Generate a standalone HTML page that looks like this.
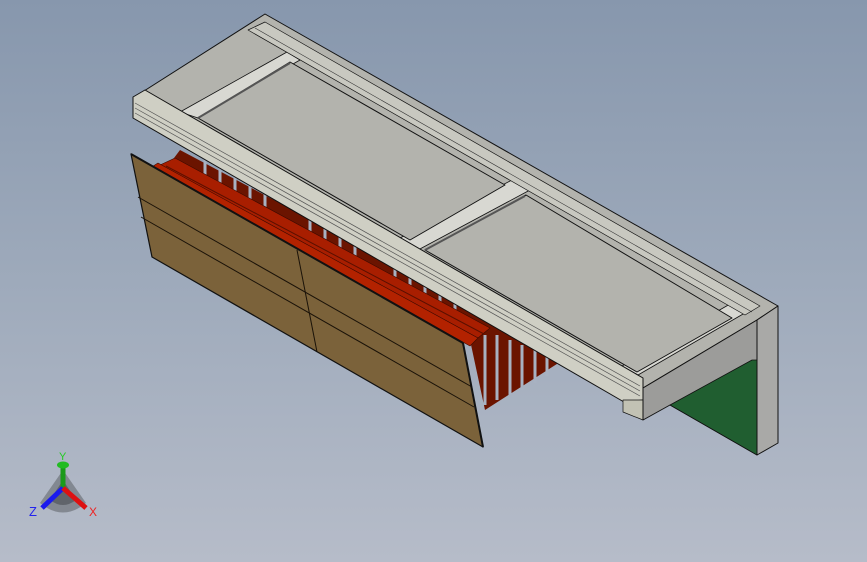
<!DOCTYPE html>
<html><head><style>
html,body{margin:0;padding:0;width:867px;height:562px;overflow:hidden}
body{background:linear-gradient(180deg,#8797ad 0%,#9eaabb 50%,#b6bcc9 100%)}
svg{display:block}
</style></head><body>
<svg width="867" height="562" viewBox="0 0 867 562" xmlns="http://www.w3.org/2000/svg" stroke-linejoin="round">
<!-- slats zone behind beams -->
<polygon points="180,150 560,352 560,362 485,410 470,340 165,170" fill="#6b1400"/>
<g stroke="#a8b2c2" stroke-width="3">
<line x1="205" y1="155" x2="205" y2="185"/><line x1="220" y1="163" x2="220" y2="192"/><line x1="235" y1="170" x2="235" y2="200"/><line x1="250" y1="178" x2="250" y2="208"/><line x1="265" y1="186" x2="265" y2="216"/>
<line x1="310" y1="210" x2="310" y2="240"/><line x1="325" y1="218" x2="325" y2="248"/><line x1="340" y1="226" x2="340" y2="256"/><line x1="355" y1="234" x2="355" y2="264"/>
<line x1="395" y1="255" x2="395" y2="285"/><line x1="410" y1="263" x2="410" y2="293"/><line x1="425" y1="271" x2="425" y2="301"/><line x1="440" y1="279" x2="440" y2="309"/><line x1="455" y1="287" x2="455" y2="317"/>
<line x1="485" y1="335" x2="485" y2="405"/><line x1="497" y1="335" x2="497" y2="400"/><line x1="510" y1="340" x2="510" y2="395"/><line x1="522" y1="345" x2="522" y2="390"/><line x1="535" y1="350" x2="535" y2="383"/><line x1="547" y1="352" x2="547" y2="376"/>
</g>
<!-- red beams -->
<polygon points="160,165 175,158 490,328 478,338" fill="#a81e00" stroke="#3a0a00" stroke-width="0.6"/>
<polygon points="150,168 158,163 478,338 470,346" fill="#b32200" stroke="#3a0a00" stroke-width="0.6"/>
<line x1="166" y1="166" x2="484" y2="334" stroke="#5a1000" stroke-width="1"/>
<!-- brown panel -->
<polygon points="131,154 463,343 483,447 152,257" fill="#7b623a" stroke="#111" stroke-width="1.2"/>
<g stroke="#1a1208" stroke-width="1">
<line x1="138" y1="197" x2="472" y2="387"/>
<line x1="141" y1="217" x2="474" y2="407"/>
<line x1="297" y1="250" x2="317" y2="352"/>
</g>
<line x1="131" y1="154" x2="463" y2="343" stroke="#111" stroke-width="2"/>
<line x1="463" y1="343" x2="483" y2="447" stroke="#111" stroke-width="2"/>
<!-- slab top face -->
<polygon points="265,14 778,306 757,320 643,388 133,98" fill="#b3b3ad" stroke="#111" stroke-width="1"/>
<polygon points="180,112 287,52 300,60 198,118" fill="#d8d8d2" stroke="#111" stroke-width="0.8"/>
<polygon points="400,238 512,180 530,190 418,250" fill="#d8d8d2" stroke="#111" stroke-width="0.8"/>
<polygon points="622,366 737,300 750,310 638,375" fill="#d8d8d2" stroke="#111" stroke-width="0.8"/>
<polygon points="290,62 505,185 410,240 198,118" fill="#b3b3ad" stroke="#111" stroke-width="1"/>
<polygon points="526,195 732,318 637,372 425,250" fill="#b3b3ad" stroke="#111" stroke-width="1"/>
<line x1="198" y1="118" x2="290" y2="63" stroke="#555" stroke-width="2"/>
<line x1="425" y1="250" x2="525" y2="196" stroke="#555" stroke-width="2"/>
<!-- back molding -->
<polygon points="248,30 265,22 760,306 745,315" fill="#c8c8c0" stroke="#111" stroke-width="0.7"/>
<line x1="255" y1="28" x2="752" y2="312" stroke="#333" stroke-width="0.6"/>
<!-- front molding -->
<polygon points="133,97 145,90 643,378 643,400 624,402 133,118" fill="#cfcfc4" stroke="#111" stroke-width="1"/>
<g stroke="#555" stroke-width="0.7">
<line x1="135" y1="103" x2="640" y2="386"/><line x1="135" y1="108" x2="640" y2="391"/><line x1="135" y1="113" x2="640" y2="396"/>
</g>
<polygon points="623,400 643,400 643,420 623,412" fill="#c2c2b4" stroke="#111" stroke-width="0.7"/>
<!-- right end -->
<polygon points="643,388 757,320 757,455 670,405 643,420" fill="#9c9c9a" stroke="#111" stroke-width="1"/>
<polygon points="670,405 752,360 757,360 757,455" fill="#205e30" stroke="#111" stroke-width="0.8"/>
<polygon points="757,320 778,306 778,443 757,455" fill="#a9a9a7" stroke="#111" stroke-width="1"/>
<!-- triad -->
<g>
<path d="M40,503 Q63,522 86,503 L63,470 Z" fill="#6f737a" opacity="0.7"/>
<path d="M50,500 Q63,510 76,500 L63,480 Z" fill="#4a4d52" opacity="0.6"/>
<line x1="63" y1="488" x2="63" y2="466" stroke="#1a9a1a" stroke-width="5"/>
<ellipse cx="63" cy="465" rx="6" ry="3.5" fill="#22bb22"/>
<line x1="63" y1="488" x2="42" y2="508" stroke="#1a1aee" stroke-width="5"/>
<line x1="63" y1="488" x2="86" y2="508" stroke="#dd1111" stroke-width="5"/>
<text x="59" y="460" font-family="Liberation Sans,sans-serif" font-size="11" fill="#22cc22">Y</text>
<text x="29" y="516" font-family="Liberation Sans,sans-serif" font-size="13" fill="#2222ee">Z</text>
<text x="89" y="516" font-family="Liberation Sans,sans-serif" font-size="12" fill="#ee2222">X</text>
</g>
</svg>
</body></html>
